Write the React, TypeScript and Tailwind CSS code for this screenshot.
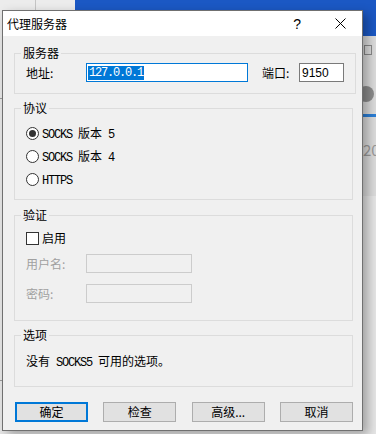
import type { ReactNode } from "react";

function Group({
  title,
  className,
  children,
}: {
  title: string;
  className: string;
  children: ReactNode;
}) {
  return (
    <fieldset
      className={`ml-[11px] mr-[9px] border border-[#dcdcdc] px-[11px] ${className}`}
    >
      <legend className="-ml-[5px] px-[2px] text-[12px] leading-[14px] text-black">
        {title}
      </legend>
      {children}
    </fieldset>
  );
}

function Radio({ checked, children }: { checked?: boolean; children: ReactNode }) {
  return (
    <div className="flex h-[23px] items-center">
      <span className="flex h-[13px] w-[13px] items-center justify-center rounded-full border border-[#333333] bg-white">
        {checked && <span className="h-[7px] w-[7px] rounded-full bg-[#333333]" />}
      </span>
      <span className="ml-[3px] text-[12px] leading-[14px]">{children}</span>
    </div>
  );
}

function Btn({ label, primary }: { label: string; primary?: boolean }) {
  return (
    <button
      className={`flex h-[20px] w-[73px] items-center justify-center bg-[#e1e1e1] text-[12px] leading-[14px] text-black ${
        primary ? "border-2 border-[#0078d7]" : "border border-[#adadad]"
      }`}
    >
      {label}
    </button>
  );
}

export default function App() {
  return (
    <div className="relative h-[434px] w-[376px] overflow-hidden bg-[#e6e6e6] font-['Noto_Sans_CJK_SC',sans-serif]">
      {/* desktop behind the dialog */}
      <div className="absolute left-0 top-0 h-[10px] w-[75px] bg-[#ececec]">
        <div className="absolute left-[35px] top-0 h-full w-px bg-[#c4c4c4]" />
      </div>
      <div className="absolute left-[75px] right-0 top-0 h-[36px] bg-[#1b58c4]" />
      <div className="absolute right-0 top-[36px] h-[160px] w-[14px] bg-[#dcdcdc]">
        <div className="absolute left-[2px] top-[9px] h-[10px] w-[8px] border border-[#8a8a8a]" />
        <div className="absolute -left-[4px] top-[50px] h-[16px] w-[16px] rounded-full bg-[#8c8c8c]" />
        <div className="absolute left-0 top-[78px] h-[3px] w-full bg-[#2d7fd6]" />
        <span className="absolute left-[1px] top-[105px] text-[15px] leading-[18px] text-[#9a9a9a]">
          20
        </span>
      </div>
      <div className="absolute left-0 top-[98px] h-px w-[3px] bg-[#9a9a9a]" />
      <div className="absolute left-0 top-[380px] h-px w-[3px] bg-[#9a9a9a]" />

      {/* dialog window */}
      <div className="absolute left-[2px] top-[10px] flex h-[421px] w-[361px] flex-col border border-[#707070] bg-[#f0f0f0] shadow-[5px_4px_10px_rgba(0,0,0,0.3)]">
        <div className="flex h-[25px] items-center bg-white pl-[4px]">
          <span className="text-[12px] leading-[14px] text-black">代理服务器</span>
          <span className="ml-auto mr-[34px] font-['Liberation_Sans',sans-serif] text-[14px] leading-[16px] text-black">
            ?
          </span>
          <svg className="mr-[16px]" width="11" height="11" viewBox="0 0 11 11">
            <path d="M0.5 0.5L10.5 10.5M10.5 0.5L0.5 10.5" stroke="#000" strokeWidth="1" />
          </svg>
        </div>

        <Group title="服务器" className="mt-[10px] h-[48px]">
          <div className="mt-[3px] flex items-center text-[12px] leading-[14px]">
            <span className="w-[60px]">地址:</span>
            <div className="flex h-[19px] w-[162px] items-center border border-[#0078d7] bg-white pl-[1px]">
              <span className="bg-[#0078d7] px-[1px] font-['Liberation_Mono',monospace] text-[12px] leading-[14px] tracking-[-1.2px] text-white">
                127.0.0.1
              </span>
            </div>
            <span className="ml-[14px] w-[37px]">端口:</span>
            <div className="flex h-[19px] w-[45px] items-center border border-[#7a7a7a] bg-white pl-[2px] font-['Liberation_Sans',sans-serif]">
              9150
            </div>
          </div>
        </Group>

        <Group title="协议" className="mt-[7px] h-[99px]">
          <div className="mt-[7px]">
            <Radio checked>
              <span className="font-['Liberation_Mono',monospace] tracking-[-1.2px]">SOCKS </span>
              版本
              <span className="font-['Liberation_Mono',monospace] tracking-[-1.2px]"> 5</span>
            </Radio>
            <Radio>
              <span className="font-['Liberation_Mono',monospace] tracking-[-1.2px]">SOCKS </span>
              版本
              <span className="font-['Liberation_Mono',monospace] tracking-[-1.2px]"> 4</span>
            </Radio>
            <Radio>
              <span className="font-['Liberation_Mono',monospace] tracking-[-1.2px]">HTTPS</span>
            </Radio>
          </div>
        </Group>

        <Group title="验证" className="mt-[8px] h-[113px]">
          <div className="mt-[6px] flex h-[20px] items-center">
            <span className="h-[13px] w-[13px] border border-[#333333] bg-white" />
            <span className="ml-[3px] text-[12px] leading-[14px]">启用</span>
          </div>
          <div className="mt-[6px] flex items-center text-[12px] leading-[14px] text-[#a0a0a0]">
            <span className="w-[60px]">用户名:</span>
            <div className="h-[19px] w-[106px] border border-[#cccccc] bg-[#f0f0f0]" />
          </div>
          <div className="mt-[11px] flex items-center text-[12px] leading-[14px] text-[#a0a0a0]">
            <span className="w-[60px]">密码:</span>
            <div className="h-[19px] w-[106px] border border-[#cccccc] bg-[#f0f0f0]" />
          </div>
        </Group>

        <Group title="选项" className="mt-[7px] h-[59px]">
          <div className="mt-[12px] text-[12px] leading-[14px]">
            没有
            <span className="font-['Liberation_Mono',monospace] tracking-[-1.2px]"> SOCKS5 </span>
            可用的选项。
          </div>
        </Group>

        <div className="ml-[12px] mr-[9px] mt-[15px] flex justify-between">
          <Btn label="确定" primary />
          <Btn label="检查" />
          <Btn label="高级..." />
          <Btn label="取消" />
        </div>
      </div>
    </div>
  );
}
